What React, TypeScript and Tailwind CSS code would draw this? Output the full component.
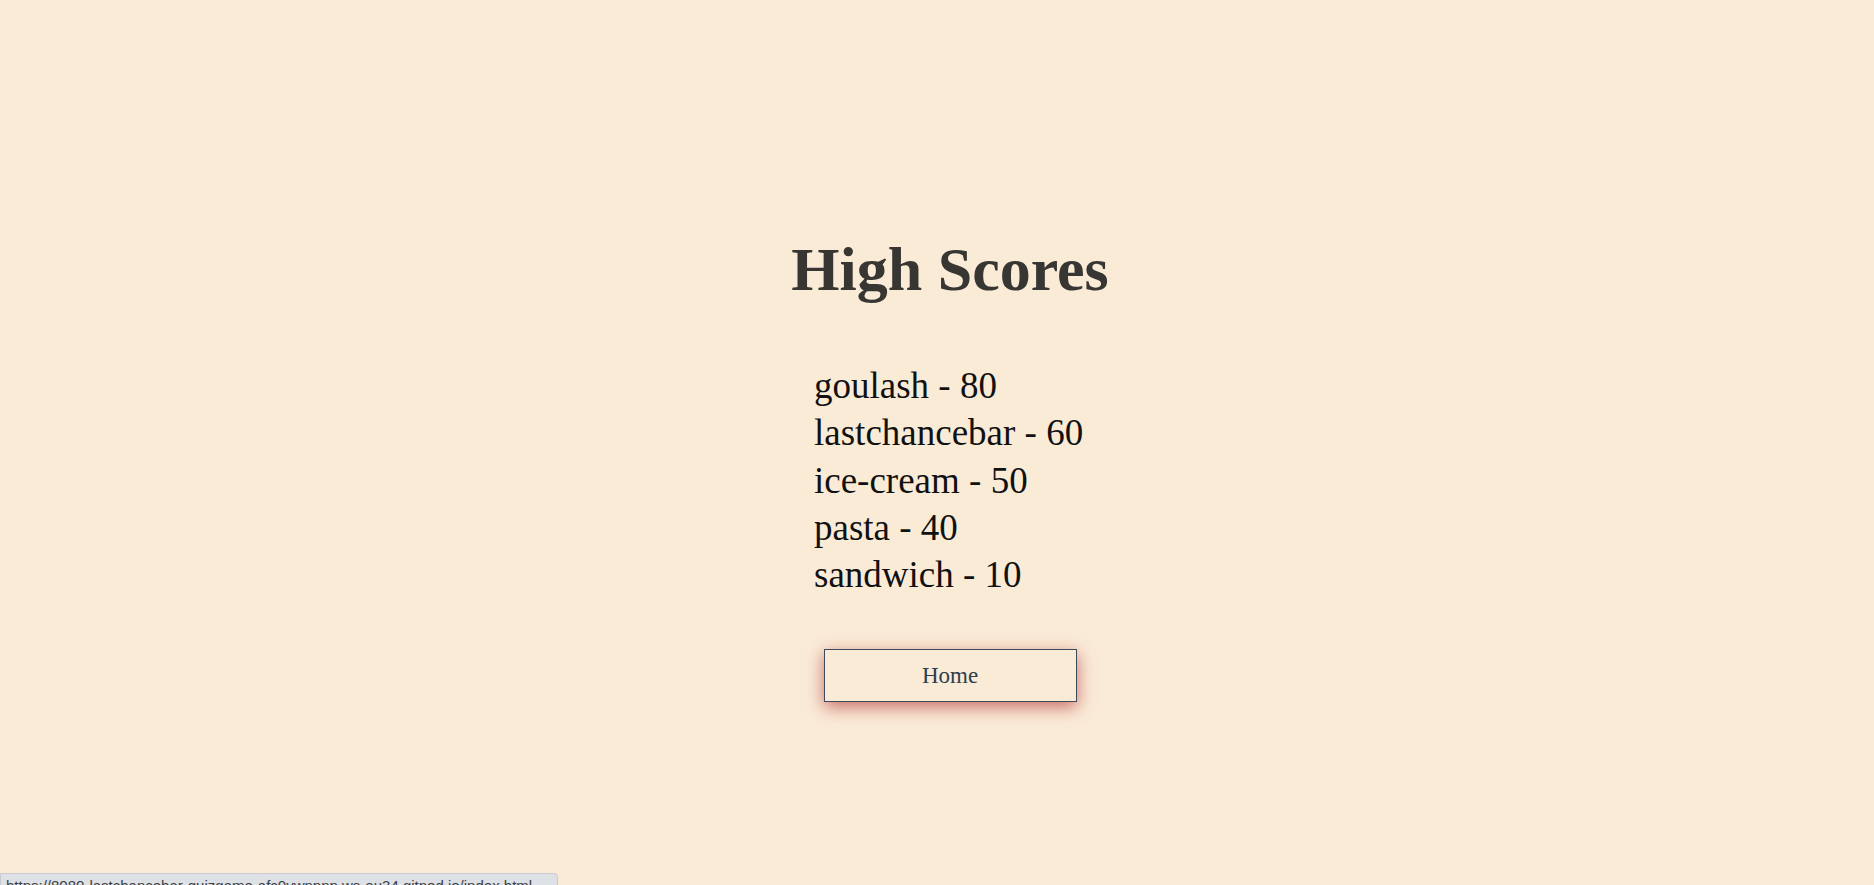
export default function App() {
  const scores = [
    { name: 'goulash', score: 80 },
    { name: 'lastchancebar', score: 60 },
    { name: 'ice-cream', score: 50 },
    { name: 'pasta', score: 40 },
    { name: 'sandwich', score: 10 },
  ];

  return (
    <div className="min-h-screen bg-[#faebd7] font-['Liberation_Serif',serif] overflow-hidden">
      <div className="flex flex-col items-center pt-[233px] pl-[26px]">
        <h1 className="text-[62px] leading-[72px] font-bold text-[#383633]">High Scores</h1>

        <ul className="mt-[57px] w-[272px] text-[37px] leading-[47.3px] text-[#111]">
          {scores.map((s) => (
            <li key={s.name}>
              {s.name} - {s.score}
            </li>
          ))}
        </ul>

        <button className="mt-[51px] w-[253px] h-[53px] border border-[#3d4b5c] bg-[#faebd7] text-[23px] text-[#2c3e50] shadow-[0_5px_16px_rgba(180,55,55,0.7)]">
          Home
        </button>
      </div>

      {/* browser status bubble */}
      <div className="fixed left-0 bottom-[-10px] w-[558px] h-[22px] bg-[#dee1e6] border border-[#c8cbd0] rounded-tr-[4px] pl-[5px] pt-[4px] text-[15px] leading-[16px] text-[#3c4043] font-['Liberation_Sans',sans-serif] whitespace-nowrap overflow-hidden">
        https://8080-lastchancebar-quizgame-afc0ywnpnp.ws-eu34.gitpod.io/index.html
      </div>
    </div>
  );
}
